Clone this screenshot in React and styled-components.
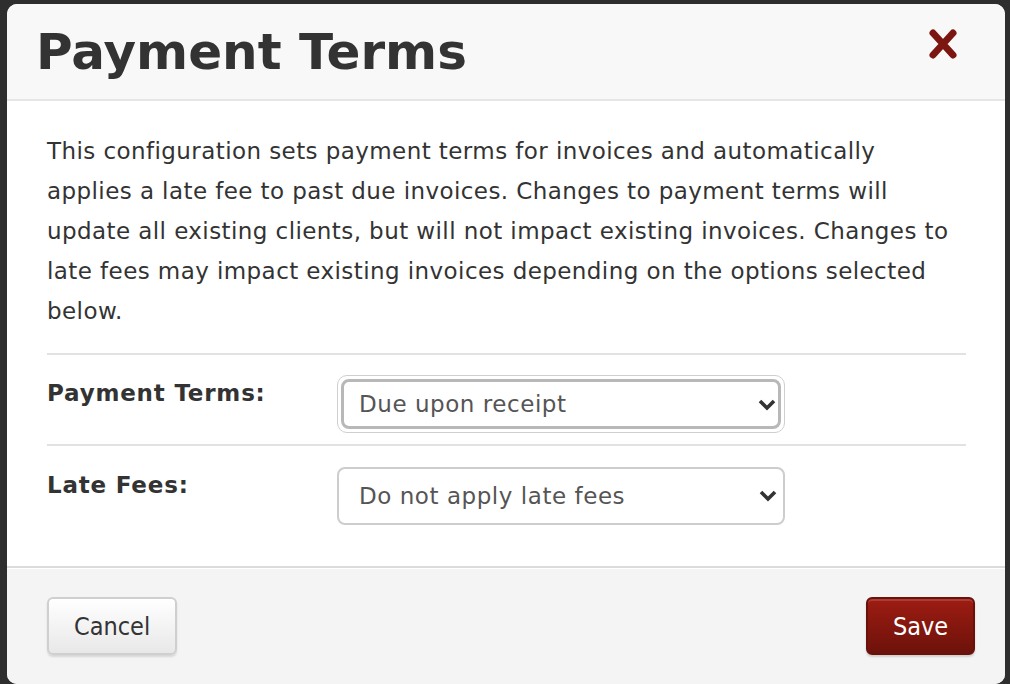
import styled, { createGlobalStyle } from 'styled-components';

const GlobalStyle = createGlobalStyle`
  html, body {
    margin: 0;
    padding: 0;
    background: #2e2e2e;
  }
  body {
    font-family: "DejaVu Sans", Verdana, sans-serif;
  }
`;

const Chevron = () => (
  <ChevronIcon viewBox="0 0 18 12" width="18" height="12">
    <path d="M2 2 L9 9 L16 2" fill="none" stroke="#333" strokeWidth="3.6" />
  </ChevronIcon>
);

const CloseIcon = () => (
  <svg viewBox="0 0 32 32" width="32" height="32">
    <path
      d="M6 5 L26 27 M26 5 L6 27"
      fill="none"
      stroke="#7b1710"
      strokeWidth="7"
      strokeLinecap="round"
    />
  </svg>
);

export default function App() {
  return (
    <>
      <GlobalStyle />
      <Page>
        <Dialog>
          <Header>
            <Title>Payment Terms</Title>
            <CloseButton aria-label="Close">
              <CloseIcon />
            </CloseButton>
          </Header>
          <Body>
            <Intro>
              This configuration sets payment terms for invoices and automatically applies a late
              fee to past due invoices. Changes to payment terms will update all existing clients,
              but will not impact existing invoices. Changes to late fees may impact existing
              invoices depending on the options selected below.
            </Intro>
            <Divider />
            <FieldRow bordered>
              <Label>Payment Terms:</Label>
              <SelectFrame focused>
                <Select focused defaultValue="receipt">
                  <option value="receipt">Due upon receipt</option>
                  <option value="net15">Net 15</option>
                  <option value="net30">Net 30</option>
                </Select>
                <Chevron />
              </SelectFrame>
            </FieldRow>
            <FieldRow>
              <Label>Late Fees:</Label>
              <SelectFrame>
                <Select defaultValue="none">
                  <option value="none">Do not apply late fees</option>
                  <option value="flat">Apply a flat fee</option>
                  <option value="percent">Apply a percentage fee</option>
                </Select>
                <Chevron />
              </SelectFrame>
            </FieldRow>
          </Body>
          <Footer>
            <Button>Cancel</Button>
            <Button primary>Save</Button>
          </Footer>
        </Dialog>
      </Page>
    </>
  );
}

const Page = styled.div`
  width: 1010px;
  height: 684px;
  padding: 4px 5px 0 7px;
  box-sizing: border-box;
  overflow: hidden;
`;

const Dialog = styled.div`
  width: 998px;
  height: 680px;
  background: #fff;
  border-radius: 10px;
  overflow: hidden;
  display: flex;
  flex-direction: column;
`;

const Header = styled.div`
  height: 95px;
  background: #f8f8f8;
  border-bottom: 2px solid #e6e6e6;
  display: flex;
  align-items: center;
  justify-content: space-between;
  padding: 0 46px 0 29px;
`;

const Title = styled.h1`
  margin: 0;
  font-family: "DejaVu Sans", Verdana, sans-serif;
  font-weight: bold;
  font-size: 50px;
  color: #333;
`;

const CloseButton = styled.button`
  align-self: flex-start;
  margin-top: 24px;
  border: none;
  background: none;
  padding: 0;
  display: flex;
  cursor: pointer;
`;

const Body = styled.div`
  padding: 30px 39px 41px 40px;
`;

const Intro = styled.p`
  margin: 0;
  padding-right: 4px;
  font-size: 23px;
  line-height: 40px;
  letter-spacing: 0.42px;
  color: #333;
`;

const Divider = styled.hr`
  margin: 22px 0 0;
  border: none;
  border-top: 2px solid #e2e2e2;
`;

const FieldRow = styled.div`
  display: grid;
  grid-template-columns: 290px 448px;
  align-items: start;
  padding: ${(p) => (p.bordered ? '20px 0 11px' : '21px 0 0')};
  border-bottom: ${(p) => (p.bordered ? '2px solid #e2e2e2' : 'none')};
`;

const Label = styled.label`
  font-size: 23px;
  line-height: 37px;
  letter-spacing: 0.8px;
  font-weight: bold;
  color: #333;
`;

const SelectFrame = styled.div`
  position: relative;
  height: 58px;
  box-sizing: border-box;
  border-radius: ${(p) => (p.focused ? '10px' : '8px')};
  border: ${(p) => (p.focused ? '1px solid #cfcfcf' : 'none')};
  padding: ${(p) => (p.focused ? '3px' : '0')};
`;

const Select = styled.select`
  appearance: none;
  -webkit-appearance: none;
  width: 100%;
  height: 100%;
  box-sizing: border-box;
  margin: 0;
  padding: ${(p) => (p.focused ? '0 40px 0 15px' : '0 40px 0 20px')};
  font-family: "DejaVu Sans", Verdana, sans-serif;
  font-size: 23px;
  letter-spacing: 0.55px;
  color: #555;
  background: #fff;
  border: ${(p) => (p.focused ? '3px solid #b8b8b8' : '2px solid #cdcdcd')};
  border-radius: 8px;
  outline: none;
`;

const ChevronIcon = styled.svg`
  position: absolute;
  right: 8px;
  top: 23px;
  pointer-events: none;
`;

const Footer = styled.div`
  flex: 1;
  background: #f4f4f4;
  border-top: 2px solid #dcdcdc;
  box-shadow: inset 0 1px 0 #fff;
  display: flex;
  justify-content: space-between;
  align-items: flex-start;
  padding: 29px 30px 0 40px;
`;

const Button = styled.button`
  height: 58px;
  box-sizing: border-box;
  padding: ${(p) => (p.primary ? '0 20px' : '0 25px')};
  min-width: ${(p) => (p.primary ? '109px' : '130px')};
  font-family: "DejaVu Sans Condensed", "DejaVu Sans", sans-serif;
  font-size: 25px;
  border-radius: 6px;
  cursor: pointer;
  color: ${(p) => (p.primary ? '#fff' : '#333')};
  border: 2px solid ${(p) => (p.primary ? '#6a1109' : '#cfcfcf')};
  background: ${(p) =>
    p.primary
      ? 'linear-gradient(#9d1c12, #6d120b)'
      : 'linear-gradient(#ffffff, #e8e8e8)'};
  box-shadow: ${(p) =>
    p.primary
      ? 'inset 0 2px 0 rgba(255,255,255,0.15), 0 2px 2px rgba(0,0,0,0.15)'
      : '0 2px 2px rgba(0,0,0,0.12)'};
`;
